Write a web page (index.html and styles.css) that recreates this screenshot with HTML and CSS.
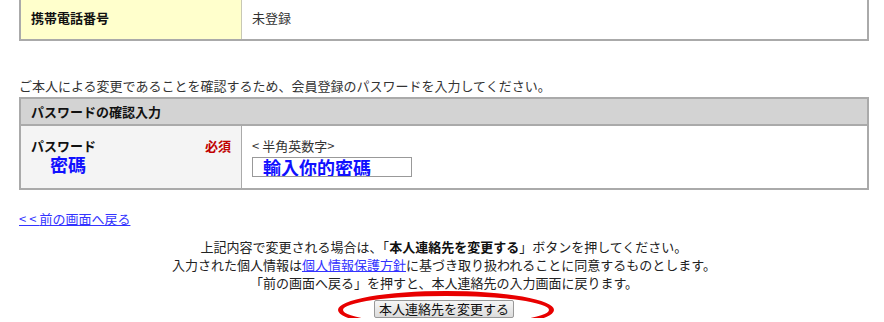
FILE: index.html
```html
<!DOCTYPE html>
<html lang="ja">
<head>
  <meta charset="UTF-8">
  <meta name="viewport" content="width=device-width, initial-scale=1.0">
  <title>本人連絡先の変更</title>
  <link rel="stylesheet" href="styles.css">
</head>
<body>
  <div class="container">
    <table class="info-table top-table">
      <tr>
        <th class="label-cell">携帯電話番号</th>
        <td class="value-cell">未登録</td>
      </tr>
    </table>

    <p class="notice">ご本人による変更であることを確認するため、会員登録のパスワードを入力してください。</p>

    <table class="info-table confirm-table">
      <tr>
        <th class="section-head" colspan="2">パスワードの確認入力</th>
      </tr>
      <tr>
        <th class="label-cell gray">
          <div class="label-row">
            <span>パスワード</span>
            <span class="required">必須</span>
          </div>
          <div class="note">密碼</div>
        </th>
        <td class="value-cell">
          <div><span class="wide">&lt;</span>半角英数字<span class="wide">&gt;</span></div>
          <input type="text" class="pw-input" value="輸入你的密碼">
        </td>
      </tr>
    </table>

    <a href="#" class="back-link"><span class="wide">&lt;&lt;</span>前の画面へ戻る</a>

    <div class="guide">
      <p>上記内容で変更される場合は、「<strong>本人連絡先を変更する</strong>」ボタンを押してください。</p>
      <p>入力された個人情報は<a href="#">個人情報保護方針</a>に基づき取り扱われることに同意するものとします。</p>
      <p>「前の画面へ戻る」を押すと、本人連絡先の入力画面に戻ります。</p>
      <div class="submit-wrap">
        <button type="submit">本人連絡先を変更する</button>
        <span class="circle"></span>
      </div>
    </div>
  </div>
</body>
</html>
```

FILE: styles.css
```css
body {
  font-family: "Noto Sans CJK JP", "Noto Sans", sans-serif;
  font-size: 13px;
  line-height: 18px;
  margin: 0;
  padding: 0;
  background-color: #fff;
  color: #333;
  overflow: hidden;
}
.container {
  width: 850px;
  margin: 0 0 0 19px;
}
.info-table {
  width: 100%;
  border-collapse: separate;
  border-spacing: 0;
  border: 2px solid #aaa;
}
.top-table {
  border-top: 0;
}
.info-table th,
.info-table td {
  text-align: left;
  vertical-align: top;
  line-height: 16px;
  padding: 0 10px;
}
.label-cell {
  width: 200px;
  font-weight: bold;
  color: #111;
  background-color: #ffffcc;
}
.top-table .label-cell,
.top-table .value-cell {
  height: 16px;
  padding-top: 10px;
  padding-bottom: 13px;
}
.top-table .value-cell {
  border-left: 1px solid #c8c8b4;
}
.value-cell {
  color: #333;
}
.wide {
  letter-spacing: 3px;
}
.notice {
  margin: 36px 0 2px;
}
.section-head {
  height: 25px;
  padding: 0 10px !important;
  vertical-align: middle !important;
  background-color: #d3d3d3;
  border-bottom: 2px solid #aaa;
  color: #111;
}
.confirm-table .label-cell,
.confirm-table .value-cell {
  height: 40px;
  padding-top: 12px;
  padding-bottom: 10px;
}
.label-cell.gray {
  background-color: #f4f4f4;
}
.confirm-table .value-cell {
  border-left: 1px solid #aaa;
}
.label-row {
  display: flex;
  justify-content: space-between;
}
.required {
  color: #c00000;
  font-weight: bold;
}
.note {
  margin: 1px 0 0 19px;
  font-size: 18px;
  line-height: 19px;
  color: #1010ff;
}
.pw-input {
  display: block;
  box-sizing: border-box;
  width: 160px;
  height: 20px;
  margin-top: 3px;
  padding: 0 0 0 10px;
  border: 1px solid #999;
  font-family: "Noto Sans CJK JP", sans-serif;
  font-size: 18px;
  font-weight: bold;
  color: #1010ff;
  background: #fff;
  outline: none;
}
.back-link {
  display: inline-block;
  margin-top: 20px;
}
a {
  color: #3333ff;
}
.guide {
  margin-top: 10px;
  text-align: center;
  color: #222;
}
.guide p {
  margin: 0;
}
.guide strong {
  color: #111;
}
.submit-wrap {
  position: relative;
  display: inline-block;
  margin-top: 8px;
}
button {
  display: block;
  width: 140px;
  height: 18px;
  padding: 0;
  font-family: "Noto Sans CJK JP", sans-serif;
  font-size: 13px;
  line-height: 16px;
  color: #111;
  border: 1px solid #999;
  border-radius: 2px;
  background: linear-gradient(#f6f6f6, #dcdcdc);
  cursor: pointer;
}
.circle {
  position: absolute;
  left: -36px;
  top: -9px;
  width: 206px;
  height: 28px;
  border: 5px solid #e80000;
  border-radius: 50%;
  pointer-events: none;
}
```
